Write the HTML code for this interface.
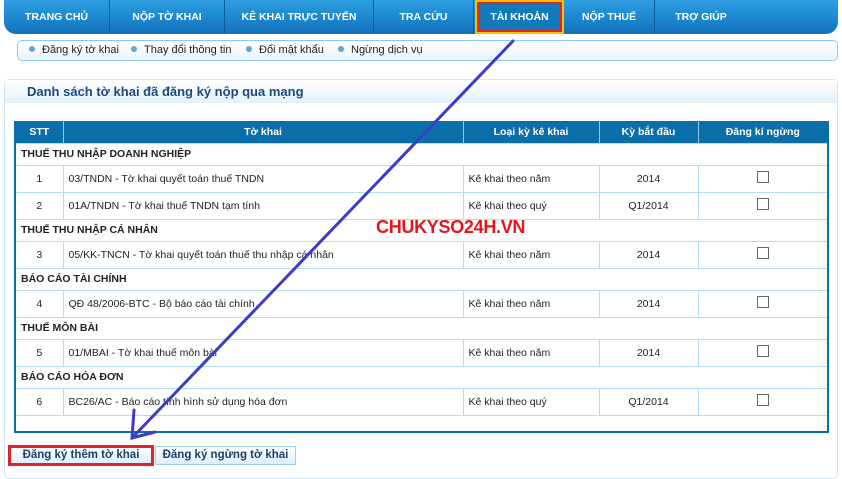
<!DOCTYPE html>
<html><head><meta charset="utf-8"><style>
*{margin:0;padding:0;box-sizing:border-box}
body{width:842px;height:467px;background:#fff;font-family:"Liberation Sans","DejaVu Sans",sans-serif;position:relative;overflow:hidden}
.nav{position:absolute;left:4px;top:0;width:834px;height:34px;border-radius:0 0 12px 12px;background:linear-gradient(#2e9ee0,#1a84cc 60%,#1670b8);}
.nav div{position:absolute;top:0;height:34px;line-height:34px;color:#fff;font-weight:bold;font-size:10.5px;text-align:center;border-right:1px solid #0e5f8a}
.sub{position:absolute;left:17px;top:40px;width:821px;height:21px;border:1px solid #8cc8f0;border-radius:5px;background:linear-gradient(#fff,#eaf5fd);font-size:11px;color:#222;line-height:19px}
.sub span{position:absolute;top:0}
.sub i{display:inline-block;width:6px;height:6px;border-radius:50%;background:#5aa9dc;margin-right:7px;vertical-align:1px}
.panel{position:absolute;left:4px;top:79px;width:834px;height:400px;border:1px solid #cfe6f7;border-radius:5px}
.ph{height:23px;background:linear-gradient(#fff,#e3f1fb);color:#1d4a7a;font-weight:bold;font-size:13px;line-height:24px;padding-left:22px}
table{position:absolute;left:14px;top:121px;width:815px;border-collapse:collapse;font-size:10.5px;color:#222}
th{background:#0a6ea8;color:#fff;height:22px;font-size:10.5px;border-right:1px solid #8cc8f0}
td{border:1px solid #b5dcf5;height:27px}
tr.g td{height:22px;font-weight:bold;padding-left:5px;font-size:10.5px}
.c{text-align:center}
.l{padding-left:5px}
table{border-left:2px solid #0a6ea8;border-right:2px solid #0a6ea8;border-bottom:2px solid #0a6ea8}
.cb{display:inline-block;width:12px;height:12px;border:1px solid #666;background:#fff}
.btn{position:absolute;top:446px;height:19px;border:1px solid #9cd0f0;background:linear-gradient(#fff,#dcefff);color:#1d3e66;font-weight:bold;font-size:11.5px;line-height:17px;text-align:center}
</style></head><body>
<div class="nav">
<div style="left:0;width:106px">TRANG CHỦ</div>
<div style="left:106px;width:115px">NỘP TỜ KHAI</div>
<div style="left:221px;width:149px">KÊ KHAI TRỰC TUYẾN</div>
<div style="left:370px;width:100px">TRA CỨU</div>
<div style="left:471px;width:89px;border:2px solid #f5c400;outline:2px solid #e3222a;outline-offset:-4px;background:#127ab8;line-height:30px">TÀI KHOẢN</div>
<div style="left:560px;width:91px">NỘP THUẾ</div>
<div style="left:651px;width:92px;border:none">TRỢ GIÚP</div>
</div>
<div class="sub">
<span style="left:11px"><i></i>Đăng ký tờ khai</span>
<span style="left:113px"><i></i>Thay đổi thông tin</span>
<span style="left:228px"><i></i>Đổi mật khẩu</span>
<span style="left:320px"><i></i>Ngừng dịch vụ</span>
</div>
<div class="panel"><div class="ph">Danh sách tờ khai đã đăng ký nộp qua mạng</div></div>
<table>
<tr><th style="width:48px">STT</th><th style="width:400px">Tờ khai</th><th style="width:136px">Loại kỳ kê khai</th><th style="width:99px">Kỳ bắt đầu</th><th>Đăng kí ngừng</th></tr>
<tr class="g"><td colspan="5">THUẾ THU NHẬP DOANH NGHIỆP</td></tr>
<tr><td class="c">1</td><td class="l">03/TNDN - Tờ khai quyết toán thuế TNDN</td><td class="l">Kê khai theo năm</td><td class="c">2014</td><td class="c"><span class="cb"></span></td></tr>
<tr><td class="c">2</td><td class="l">01A/TNDN - Tờ khai thuế TNDN tạm tính</td><td class="l">Kê khai theo quý</td><td class="c">Q1/2014</td><td class="c"><span class="cb"></span></td></tr>
<tr class="g"><td colspan="5">THUẾ THU NHẬP CÁ NHÂN</td></tr>
<tr><td class="c">3</td><td class="l">05/KK-TNCN - Tờ khai quyết toán thuế thu nhập cá nhân</td><td class="l">Kê khai theo năm</td><td class="c">2014</td><td class="c"><span class="cb"></span></td></tr>
<tr class="g"><td colspan="5">BÁO CÁO TÀI CHÍNH</td></tr>
<tr><td class="c">4</td><td class="l">QĐ 48/2006-BTC - Bộ báo cáo tài chính</td><td class="l">Kê khai theo năm</td><td class="c">2014</td><td class="c"><span class="cb"></span></td></tr>
<tr class="g"><td colspan="5">THUẾ MÔN BÀI</td></tr>
<tr><td class="c">5</td><td class="l">01/MBAI - Tờ khai thuế môn bài</td><td class="l">Kê khai theo năm</td><td class="c">2014</td><td class="c"><span class="cb"></span></td></tr>
<tr class="g"><td colspan="5">BÁO CÁO HÓA ĐƠN</td></tr>
<tr><td class="c">6</td><td class="l">BC26/AC - Báo cáo tình hình sử dụng hóa đơn</td><td class="l">Kê khai theo quý</td><td class="c">Q1/2014</td><td class="c"><span class="cb"></span></td></tr>
<tr><td colspan="5" style="height:17px;border-bottom:none"></td></tr>
</table>
<div style="position:absolute;left:376px;top:217px;color:#e8141c;font-size:18px;font-weight:bold;letter-spacing:-0.3px">CHUKYSO24H.VN</div>
<div class="btn" style="left:8px;width:146px;height:21px;top:445px;border:3px solid #e3222a;line-height:15px">Đăng ký thêm tờ khai</div>
<div class="btn" style="left:155px;width:141px">Đăng ký ngừng tờ khai</div>
<svg style="position:absolute;left:0;top:0" width="842" height="467"><g stroke="#3c3cc8" stroke-width="3" fill="none" stroke-linecap="round"><line x1="513" y1="41" x2="132" y2="438"/><path d="M134 410 L132 438 L155 432"/></g></svg>
</body></html>
